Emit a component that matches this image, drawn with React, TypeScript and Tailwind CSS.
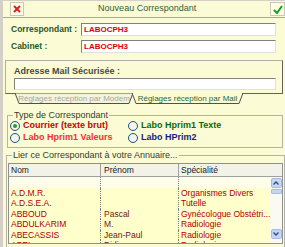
import React from "react";

const rows = [
  { nom: "", prenom: "", spec: "", blank: true },
  { nom: "A.D.M.R.", prenom: "", spec: "Organismes Divers" },
  { nom: "A.D.S.E.A.", prenom: "", spec: "Tutelle" },
  { nom: "ABBOUD", prenom: "Pascal", spec: "Gynécologue Obstétri..." },
  { nom: "ABDULKARIM", prenom: "M.", spec: "Radiologie" },
  { nom: "ABECASSIS", prenom: "Jean-Paul", spec: "Radiologie" },
  { nom: "ABEL", prenom: "Didier", spec: "Radiologie" },
];

function Radio({ checked }: { checked?: boolean }) {
  return (
    <svg width="10" height="10" viewBox="0 0 10 10" className="shrink-0">
      <circle cx="5" cy="5" r="4.5" fill="#f4f4ec" stroke="#1c5180" strokeWidth="1" />
      {checked && <circle cx="5" cy="5" r="2" fill="#21a121" />}
    </svg>
  );
}

function Tab({ label, width, active }: { label: string; width: number; active?: boolean }) {
  return (
    <div className="relative h-[11px] flex items-center justify-center" style={{ width }}>
      <svg className="absolute inset-0" width={width} height="11" viewBox={`0 0 ${width} 11`}>
        <polygon
          points={`0,0 4,10.5 ${width - 4},10.5 ${width},0`}
          fill={active ? "#fbfbd6" : "#f4f4dc"}
          stroke="#505050"
          strokeWidth="1"
        />
        {active && <line x1="1" y1="0" x2={width - 1} y2="0" stroke="#fbfbd6" strokeWidth="2" />}
      </svg>
      <span className={`relative text-[8px] leading-none ${active ? "text-[#1b6b3b]" : "text-[#a8a8a0]"}`}>
        {label}
      </span>
    </div>
  );
}

export default function App() {
  return (
    <div
      className="w-[285px] h-[247px] bg-[#d4d0c8] overflow-hidden flex"
      style={{ fontFamily: '"Liberation Sans", Arial, sans-serif' }}
    >
      <div className="ml-[3px] mr-[2px] mt-[1px] flex-1 bg-[#fbfbd6] flex flex-col">
        {/* Title bar */}
        <div className="h-[17px] flex items-center border-b border-[#a8a898]">
          <div className="ml-[7px] w-[14px] h-[14px] border border-[#c8c8b8] bg-[#fdfde8] flex items-center justify-center">
            <svg width="8" height="8" viewBox="0 0 8 8">
              <path d="M1 1 L7 7 M7 1 L1 7" stroke="#e02020" strokeWidth="2" />
            </svg>
          </div>
          <div className="flex-1 text-center text-[9px] text-[#2f5f3a]">Nouveau Correspondant</div>
          <div className="mr-[1px] w-[15px] h-[14px] border border-[#c8c8b8] bg-[#fdfde8] flex items-center justify-center">
            <svg width="10" height="9" viewBox="0 0 10 9">
              <path d="M1 5 L4 8 L9 1" stroke="#1aa01a" strokeWidth="2" fill="none" />
            </svg>
          </div>
        </div>

        {/* Fields */}
        <div className="mt-[5px] pl-[8px] pr-[10px] flex flex-col gap-[4px]">
          <div className="flex items-center">
            <span className="w-[70px] text-[8.5px] font-bold text-[#1e5a1e]">Correspondant :</span>
            <div className="flex-1 h-[13px] bg-white border border-[#808080] border-r-[#e0e0e0] border-b-[#e0e0e0] flex items-center px-[2px]">
              <span className="text-[8px] font-bold text-[#e00000]">LABOCPH3</span>
            </div>
          </div>
          <div className="flex items-center">
            <span className="w-[70px] text-[8.5px] font-bold text-[#1e5a1e]">Cabinet :</span>
            <div className="flex-1 h-[13px] bg-white border border-[#808080] border-r-[#e0e0e0] border-b-[#e0e0e0] flex items-center px-[2px]">
              <span className="text-[8px] font-bold text-[#e00000]">LABOCPH3</span>
            </div>
          </div>
        </div>

        {/* Tab panel */}
        <div className="mt-[7px] ml-[2px] mr-[3px] border border-[#b0b0a0] border-r-[#606060] border-b-[#606060] pt-[5px] pb-[3px] pl-[8px] pr-[6px]">
          <div className="text-[9px] font-bold text-[#4a4a40] leading-[10px]">Adresse Mail Sécurisée :</div>
          <div className="mt-[2px] h-[12px] bg-white border border-[#808080] border-r-[#e0e0e0] border-b-[#e0e0e0]" />
        </div>
        <div className="flex ml-[12px] -mt-[1px]">
          <Tab label="Réglages réception par Modem" width={118} />
          <div className="-ml-[1px]">
            <Tab label="Réglages réception par Mail" width={111} active />
          </div>
        </div>

        {/* Type de correspondant */}
        <fieldset className="mt-[6px] ml-[4px] mr-[3px] border border-[#b4b4a4] px-[2px] pb-[3px]">
          <legend className="ml-[3px] px-[1px] text-[9px] leading-[10px] text-[#34402c]">Type de Correspondant</legend>
          <div className="flex">
            <div className="w-[118px] shrink-0 flex flex-col">
              <div className="h-[12px] flex items-center gap-[3px]">
                <Radio checked />
                <span className="text-[9px] font-bold text-[#c80000] whitespace-nowrap">Courrier (texte brut)</span>
              </div>
              <div className="h-[12px] flex items-center gap-[3px]">
                <Radio />
                <span className="text-[9px] font-bold text-[#f03030] whitespace-nowrap">Labo Hprim1 Valeurs</span>
              </div>
            </div>
            <div className="flex flex-col">
              <div className="h-[12px] flex items-center gap-[3px]">
                <Radio />
                <span className="text-[9px] font-bold text-[#0a6a0a] whitespace-nowrap">Labo Hprim1 Texte</span>
              </div>
              <div className="h-[12px] flex items-center gap-[3px]">
                <Radio />
                <span className="text-[9px] font-bold text-[#1a1a80] whitespace-nowrap">Labo HPrim2</span>
              </div>
            </div>
          </div>
        </fieldset>

        {/* Annuaire */}
        <fieldset className="mt-[2px] ml-[3px] mr-[1px] border border-[#b4b4a4] border-b-0 flex-1 min-h-0 px-[1px]">
          <legend className="ml-[4px] px-[1px] text-[9px] leading-[10px] text-[#34402c]">
            Lier ce Correspondant à votre Annuaire...
          </legend>
          <div className="mt-[3px] h-[81px] border border-[#909090] flex flex-col overflow-hidden bg-[#ffffcc]">
            <div className="h-[13px] shrink-0 bg-[#f2f2e8] border-b border-[#a0a0a0] flex text-[8.5px] text-[#202020]">
              <div className="w-[92px] shrink-0 pl-[2px] flex items-center border-r border-[#a0a0a0]">Nom</div>
              <div className="w-[78px] shrink-0 pl-[3px] flex items-center border-r border-[#a0a0a0]">Prénom</div>
              <div className="flex-1 pl-[2px] flex items-center">Spécialité</div>
            </div>
            <div className="flex flex-1 min-h-0">
              <div className="flex-1 flex flex-col">
                {rows.map((r, i) => (
                  <div
                    key={i}
                    className={`h-[10.5px] shrink-0 flex text-[8.5px] leading-[10.5px] ${
                      r.blank ? "bg-[#fdfdea]" : "bg-[#ffffcc]"
                    }`}
                  >
                    <div className="w-[92px] shrink-0 pl-[2px] text-[#b00000] border-r border-dotted border-[#808080] whitespace-nowrap overflow-hidden">
                      {r.nom}
                    </div>
                    <div className="w-[78px] shrink-0 pl-[3px] text-[#6a1a10] border-r border-dotted border-[#808080] whitespace-nowrap overflow-hidden">
                      {r.prenom}
                    </div>
                    <div className="flex-1 pl-[2px] text-[#b00000] whitespace-nowrap overflow-hidden">{r.spec}</div>
                  </div>
                ))}
              </div>
              <div className="w-[12px] shrink-0 bg-[#fafaf0] flex flex-col items-center pt-[1px] gap-[1px]">
                <div className="w-[11px] h-[10px] rounded-[2px] bg-[#c4d6f6] border border-[#a8bce0] flex items-center justify-center">
                  <svg width="6" height="4" viewBox="0 0 6 4">
                    <path d="M0.5 3.5 L3 1 L5.5 3.5" stroke="#2a4a8a" strokeWidth="1.3" fill="none" />
                  </svg>
                </div>
                <div className="w-[11px] h-[5px] rounded-[1px] bg-[#c4d6f6] border border-[#a8bce0]" />
                <div className="flex-1" />
                <div className="w-[11px] h-[10px] mb-[4px] rounded-[2px] bg-[#c4d6f6] border border-[#a8bce0] flex items-center justify-center">
                  <svg width="6" height="4" viewBox="0 0 6 4">
                    <path d="M0.5 0.5 L3 3 L5.5 0.5" stroke="#2a4a8a" strokeWidth="1.3" fill="none" />
                  </svg>
                </div>
              </div>
            </div>
          </div>
        </fieldset>
      </div>
    </div>
  );
}
